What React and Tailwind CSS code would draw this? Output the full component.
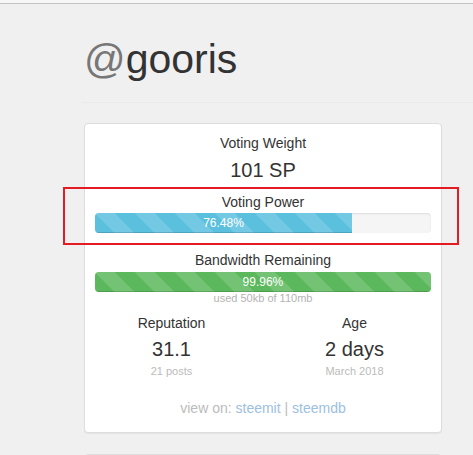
import React from "react";

const stripes =
  "bg-[linear-gradient(45deg,rgba(255,255,255,.15)_25%,transparent_25%,transparent_50%,rgba(255,255,255,.15)_50%,rgba(255,255,255,.15)_75%,transparent_75%,transparent)] bg-[length:40px_40px]";

function Progress({ value, color }) {
  return (
    <div className="h-[20px] w-full overflow-hidden rounded-[4px] bg-[#f5f5f5] shadow-[inset_0_1px_2px_rgba(0,0,0,0.1)]">
      <div
        className={`h-full ${color} ${stripes} text-center text-[12px] leading-[20px] text-white shadow-[inset_0_-1px_0_rgba(0,0,0,0.15)]`}
        style={{ width: `${value}%` }}
      >
        {value.toFixed(2)}%
      </div>
    </div>
  );
}

function Stat({ label, value, sub }) {
  return (
    <div className="flex-1 text-center">
      <div className="text-[14px] leading-[20px] text-[#333]">{label}</div>
      <div className="mt-[2px] text-[20px] leading-[28px] text-[#333]">{value}</div>
      <div className="text-[11px] leading-[16px] text-[#bbb]">{sub}</div>
    </div>
  );
}

export default function App() {
  return (
    <div className="relative h-[455px] overflow-hidden bg-[#f0f0f0] font-['Liberation_Sans',Arial,sans-serif]">
      <div className="h-[3px] bg-[#f7f7f7]" />
      <div className="h-px bg-[#c3c3c3]" />

      <div className="ml-[82px] mt-[33px] border-b border-[#e9e9e9] pb-[21px]">
        <h1 className="pl-[2px] text-[41px] leading-[44px] text-[#333]">
          <span className="text-[#777]">@</span>gooris
        </h1>
      </div>

      <div className="ml-[84px] mt-[20px] w-[358px]">
        <div className="rounded-[4px] border border-[#ddd] bg-white px-[10px] pb-[14px] pt-[9px] text-center shadow-[0_1px_1px_rgba(0,0,0,0.05)]">
          <div className="text-[14px] leading-[20px] text-[#333]">Voting Weight</div>
          <div className="mt-[3px] text-[20px] leading-[28px] text-[#333]">101 SP</div>

          <div className="mt-[8px] text-[14px] leading-[20px] text-[#333]">Voting Power</div>
          <div className="mt-[1px]">
            <Progress value={76.48} color="bg-[#5bc0de]" />
          </div>

          <div className="mt-[17px] text-[14px] leading-[20px] text-[#333]">Bandwidth Remaining</div>
          <div className="mt-[2px]">
            <Progress value={99.96} color="bg-[#5cb85c]" />
          </div>
          <div className="text-[11px] leading-[13px] text-[#b3b3b3]">used 50kb of 110mb</div>

          <div className="mx-[-15px] mt-[8px] flex">
            <Stat label="Reputation" value="31.1" sub="21 posts" />
            <Stat label="Age" value="2 days" sub="March 2018" />
          </div>

          <div className="mt-[19px] text-[14px] leading-[20px] text-[#bbb]">
            view on: <a className="text-[#9dc0e0]">steemit</a> | <a className="text-[#9dc0e0]">steemdb</a>
          </div>
        </div>

        <div className="mt-[21px] h-[60px] rounded-[4px] border border-[#ddd] bg-white" />
      </div>

      <div className="absolute left-[63px] top-[187px] h-[58px] w-[396px] border-[2.5px] border-[#e31b23]" />
    </div>
  );
}
